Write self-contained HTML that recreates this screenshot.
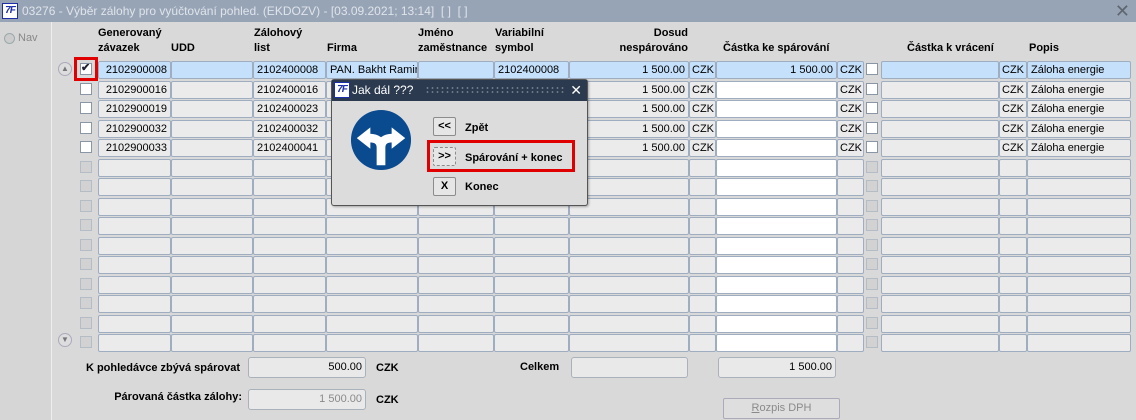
<!DOCTYPE html><html><head><meta charset="utf-8"><style>
*{box-sizing:border-box;margin:0;padding:0}
body{width:1136px;height:420px;overflow:hidden;background:#d9d9d9;font-family:"Liberation Sans",Arial,sans-serif;font-size:11px;color:#000;position:relative}
.a{position:absolute}
.tb{left:0;top:0;width:1136px;height:22px;background:#97a4b6;color:#dfe4ea;font-size:12px;line-height:22px;padding-left:22px}
.logo{position:absolute;width:16px;height:16px;background:#fff;border:1px solid #1c2fa8;color:#1c2fa8;font-weight:bold;font-style:italic;font-size:10px;line-height:14px;text-align:center;letter-spacing:-1px}
.nav{left:0;top:22px;width:52px;height:398px;border-right:1px solid #eee;background:#d6d6d6}
.h{font-weight:bold;font-size:11px;line-height:15px}
.c{position:absolute;height:18px;border:1px solid #9fadc0;border-radius:2px;background:#ebebeb;line-height:16px;padding:0 3px;font-size:11px;white-space:nowrap;overflow:hidden}
.r{text-align:right}
.sel{background:#c4e0fb}
.w{background:#fff}
.cb{position:absolute;width:12px;height:12px;border:1px solid #8a96a6;background:#fff}
.cbg{position:absolute;width:12px;height:12px;border:1px solid #b4bcc6;background:#d2d2d2}
.btn{position:absolute;width:23px;height:19px;border:1px solid #8c8c8c;border-radius:2px;background:#e6e6e6;font-weight:bold;font-size:11px;text-align:center;line-height:17px}
.f{position:absolute;height:21px;border:1px solid #a9b1bb;border-radius:3px;background:#e9e9e9;text-align:right;padding-right:3px;line-height:19px}
</style></head><body>
<div class="a tb"><div class="logo" style="left:2px;top:3px">7F</div>03276 - Výběr zálohy pro vyúčtování pohled. (EKDOZV) - [03.09.2021; 13:14]&nbsp; [ ]&nbsp; [ ]<span style="position:absolute;right:6px;top:0;color:#5e6670;font-size:18px">✕</span></div>
<div class="a nav"><div class="a" style="left:4px;top:11px;width:11px;height:11px;border-radius:50%;border:1px solid #9aa;background:#ccc"></div><div class="a" style="left:18px;top:10px;color:#888">Nav</div></div>

<div class="a h" style="left:98px;top:26px">Generovaný<br>závazek</div>
<div class="a h" style="left:171px;top:41px">UDD</div>
<div class="a h" style="left:254px;top:26px">Zálohový<br>list</div>
<div class="a h" style="left:327px;top:41px">Firma</div>
<div class="a h" style="left:418px;top:26px">Jméno<br>zaměstnance</div>
<div class="a h" style="left:495px;top:26px">Variabilní<br>symbol</div>
<div class="a h" style="left:569px;top:26px;width:119px;text-align:right">Dosud<br>nespárováno</div>
<div class="a h" style="left:723px;top:41px">Částka ke spárování</div>
<div class="a h" style="left:907px;top:41px">Částka k vrácení</div>
<div class="a h" style="left:1029px;top:41px">Popis</div>

<div class="a" style="left:58px;top:62px;width:14px;height:14px;border:1px solid #aab;border-radius:50%;background:#ddd;font-size:8px;color:#777;text-align:center;line-height:12px">▲</div>
<div class="a" style="left:58px;top:333px;width:14px;height:14px;border:1px solid #aab;border-radius:50%;background:#ddd;font-size:8px;color:#777;text-align:center;line-height:12px">▼</div>
<div class="a" style="left:74px;top:57px;width:24px;height:24px;border:3px solid #e00000"></div>

<div id="g"></div>
<div class="a" style="left:0;top:61px">
<div class="cb" style="left:80px;top:2px"><span style="position:absolute;left:0;top:-3px;font-size:11px;font-weight:bold;color:#223">✔</span></div>
<div class="c sel r" style="left:98px;width:73px">2102900008</div><div class="c sel" style="left:171px;width:82px"></div><div class="c sel" style="left:253px;width:73px">2102400008</div><div class="c sel" style="left:326px;width:92px">PAN. Bakht Ramin</div><div class="c sel" style="left:418px;width:76px"></div><div class="c sel" style="left:494px;width:75px">2102400008</div><div class="c sel r" style="left:569px;width:120px">1 500.00</div><div class="c sel" style="left:689px;width:27px;padding:0 2px">CZK</div><div class="c sel r" style="left:716px;width:121px">1 500.00</div><div class="c sel" style="left:837px;width:27px;padding:0 2px">CZK</div><div class="cb" style="left:866px;top:2px"></div><div class="c sel" style="left:881px;width:118px"></div><div class="c sel" style="left:999px;width:28px;padding:0 2px">CZK</div><div class="c sel" style="left:1027px;width:104px">Záloha energie</div></div>
<div class="a" style="left:0;top:80.5px">
<div class="cb" style="left:80px;top:2px"></div><div class="c r" style="left:98px;width:73px">2102900016</div><div class="c" style="left:171px;width:82px"></div><div class="c" style="left:253px;width:73px">2102400016</div><div class="c" style="left:326px;width:92px"></div><div class="c" style="left:418px;width:76px"></div><div class="c" style="left:494px;width:75px"></div><div class="c r" style="left:569px;width:120px">1 500.00</div><div class="c" style="left:689px;width:27px;padding:0 2px">CZK</div><div class="c w" style="left:716px;width:121px"></div><div class="c" style="left:837px;width:27px;padding:0 2px">CZK</div><div class="cb" style="left:866px;top:2px"></div><div class="c" style="left:881px;width:118px"></div><div class="c" style="left:999px;width:28px;padding:0 2px">CZK</div><div class="c" style="left:1027px;width:104px">Záloha energie</div></div>
<div class="a" style="left:0;top:100px">
<div class="cb" style="left:80px;top:2px"></div><div class="c r" style="left:98px;width:73px">2102900019</div><div class="c" style="left:171px;width:82px"></div><div class="c" style="left:253px;width:73px">2102400023</div><div class="c" style="left:326px;width:92px"></div><div class="c" style="left:418px;width:76px"></div><div class="c" style="left:494px;width:75px"></div><div class="c r" style="left:569px;width:120px">1 500.00</div><div class="c" style="left:689px;width:27px;padding:0 2px">CZK</div><div class="c w" style="left:716px;width:121px"></div><div class="c" style="left:837px;width:27px;padding:0 2px">CZK</div><div class="cb" style="left:866px;top:2px"></div><div class="c" style="left:881px;width:118px"></div><div class="c" style="left:999px;width:28px;padding:0 2px">CZK</div><div class="c" style="left:1027px;width:104px">Záloha energie</div></div>
<div class="a" style="left:0;top:119.5px">
<div class="cb" style="left:80px;top:2px"></div><div class="c r" style="left:98px;width:73px">2102900032</div><div class="c" style="left:171px;width:82px"></div><div class="c" style="left:253px;width:73px">2102400032</div><div class="c" style="left:326px;width:92px"></div><div class="c" style="left:418px;width:76px"></div><div class="c" style="left:494px;width:75px"></div><div class="c r" style="left:569px;width:120px">1 500.00</div><div class="c" style="left:689px;width:27px;padding:0 2px">CZK</div><div class="c w" style="left:716px;width:121px"></div><div class="c" style="left:837px;width:27px;padding:0 2px">CZK</div><div class="cb" style="left:866px;top:2px"></div><div class="c" style="left:881px;width:118px"></div><div class="c" style="left:999px;width:28px;padding:0 2px">CZK</div><div class="c" style="left:1027px;width:104px">Záloha energie</div></div>
<div class="a" style="left:0;top:139px">
<div class="cb" style="left:80px;top:2px"></div><div class="c r" style="left:98px;width:73px">2102900033</div><div class="c" style="left:171px;width:82px"></div><div class="c" style="left:253px;width:73px">2102400041</div><div class="c" style="left:326px;width:92px"></div><div class="c" style="left:418px;width:76px"></div><div class="c" style="left:494px;width:75px"></div><div class="c r" style="left:569px;width:120px">1 500.00</div><div class="c" style="left:689px;width:27px;padding:0 2px">CZK</div><div class="c w" style="left:716px;width:121px"></div><div class="c" style="left:837px;width:27px;padding:0 2px">CZK</div><div class="cb" style="left:866px;top:2px"></div><div class="c" style="left:881px;width:118px"></div><div class="c" style="left:999px;width:28px;padding:0 2px">CZK</div><div class="c" style="left:1027px;width:104px">Záloha energie</div></div>
<script>
var g=document.getElementById('g'),h='';
var cols=[[98,73],[171,82],[253,73],[326,92],[418,76],[494,75],[569,120],[689,27],[716,121,1],[837,27],[881,118],[999,28],[1027,104]];
for(var i=5;i<15;i++){var t=61+i*19.5;h+='<div class="a" style="left:0;top:'+t+'px"><div class="cbg" style="left:80px;top:2px"></div><div class="cbg" style="left:866px;top:2px"></div>';
cols.forEach(function(c){h+='<div class="c'+(c[2]?' w':'')+'" style="left:'+c[0]+'px;width:'+c[1]+'px"></div>'});h+='</div>';}
g.innerHTML=h;
</script>

<div class="a" style="left:331px;top:79px;width:257px;height:127px;background:#dcdcdc;border:1px solid #555;border-radius:3px;box-shadow:1px 1px 2px rgba(0,0,0,.3)">
<div class="a" style="left:0;top:0;width:255px;height:21px;background:#2b3a4f;color:#fff;font-size:12px;line-height:21px;padding-left:20px">Jak dál ???
<div class="a" style="left:93px;top:6px;width:140px;height:9px;background-image:radial-gradient(#6c7888 1px,transparent 1.2px);background-size:5px 4px"></div>
<span style="position:absolute;right:5px;top:0;font-size:14px">✕</span></div>
<div class="logo" style="left:2px;top:2px">7F</div>
<svg class="a" style="left:18px;top:29px" width="62" height="62" viewBox="0 0 64 64"><circle cx="32" cy="32" r="31" fill="#0a4a8e"/>
<path d="M32 58 V40 Q32 30 20 30 M32 40 Q32 30 44 30" fill="none" stroke="#fff" stroke-width="9"/>
<path d="M7 30 L21 19 L21 41 Z M57 30 L43 19 L43 41 Z" fill="#fff"/></svg>
<div class="btn" style="left:101px;top:37px">&lt;&lt;</div><div class="a h" style="left:133px;top:41px">Zpět</div>
<div class="btn" style="left:101px;top:67px;border-style:dashed">&gt;&gt;</div><div class="a h" style="left:133px;top:71px">Spárování + konec</div>
<div class="btn" style="left:101px;top:97px">X</div><div class="a h" style="left:133px;top:100px">Konec</div>
<div class="a" style="left:95px;top:60px;width:148px;height:32px;border:3px solid #e00000"></div>
</div>

<div class="a h" style="left:40px;top:361px;width:200px;text-align:right">K pohledávce zbývá spárovat</div>
<div class="f" style="left:248px;top:357px;width:118px">500.00</div>
<div class="a h" style="left:376px;top:361px">CZK</div>
<div class="a h" style="left:520px;top:360px">Celkem</div>
<div class="f" style="left:571px;top:357px;width:117px"></div>
<div class="f" style="left:718px;top:357px;width:118px">1 500.00</div>
<div class="a h" style="left:40px;top:390px;width:202px;text-align:right">Párovaná částka zálohy:</div>
<div class="f" style="left:248px;top:389px;width:118px;color:#8a8a8a">1 500.00</div>
<div class="a h" style="left:376px;top:393px">CZK</div>
<div class="a" style="left:723px;top:398px;width:117px;height:21px;border:1px solid #aab;border-radius:2px;background:#dedede;color:#8a8a8a;text-align:center;line-height:19px"><u>R</u>ozpis DPH</div>
</body></html>
